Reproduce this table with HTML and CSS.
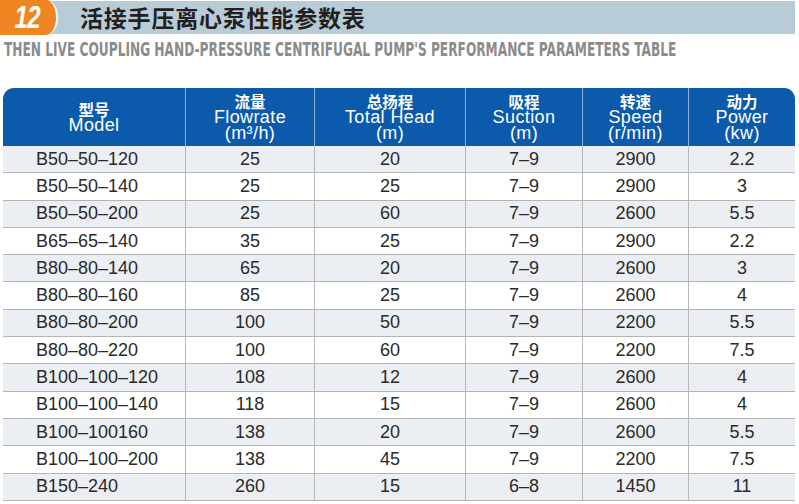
FILE: index.html
```html
<!DOCTYPE html>
<html lang="zh">
<head>
<meta charset="utf-8">
<title>活接手压离心泵性能参数表</title>
<link rel="stylesheet" href="styles.css">
</head>
<body>
<div class="page">
  <div class="band">
    <div class="tab"><span class="num">12</span></div>
    <h1 class="title">活接手压离心泵性能参数表</h1>
  </div>
  <p class="subtitle"><span class="sub-text">THEN LIVE COUPLING HAND-PRESSURE CENTRIFUGAL PUMP'S PERFORMANCE PARAMETERS TABLE</span></p>
  <div class="table-wrap">
    <table class="spec">
      <colgroup>
        <col class="c1"><col class="c2"><col class="c3"><col class="c4"><col class="c5"><col class="c6">
      </colgroup>
      <thead>
        <tr>
          <th><span class="zh">型号</span><span class="en">Model</span></th>
          <th><span class="zh">流量</span><span class="en">Flowrate</span><span class="en">(m³/h)</span></th>
          <th><span class="zh">总扬程</span><span class="en">Total Head</span><span class="en">(m)</span></th>
          <th><span class="zh">吸程</span><span class="en">Suction</span><span class="en">(m)</span></th>
          <th><span class="zh">转速</span><span class="en">Speed</span><span class="en">(r/min)</span></th>
          <th><span class="zh">动力</span><span class="en">Power</span><span class="en">(kw)</span></th>
        </tr>
      </thead>
      <tbody>
        <tr><td>B50–50–120</td><td>25</td><td>20</td><td>7–9</td><td>2900</td><td>2.2</td></tr>
        <tr><td>B50–50–140</td><td>25</td><td>25</td><td>7–9</td><td>2900</td><td>3</td></tr>
        <tr><td>B50–50–200</td><td>25</td><td>60</td><td>7–9</td><td>2600</td><td>5.5</td></tr>
        <tr><td>B65–65–140</td><td>35</td><td>25</td><td>7–9</td><td>2900</td><td>2.2</td></tr>
        <tr><td>B80–80–140</td><td>65</td><td>20</td><td>7–9</td><td>2600</td><td>3</td></tr>
        <tr><td>B80–80–160</td><td>85</td><td>25</td><td>7–9</td><td>2600</td><td>4</td></tr>
        <tr><td>B80–80–200</td><td>100</td><td>50</td><td>7–9</td><td>2200</td><td>5.5</td></tr>
        <tr><td>B80–80–220</td><td>100</td><td>60</td><td>7–9</td><td>2200</td><td>7.5</td></tr>
        <tr><td>B100–100–120</td><td>108</td><td>12</td><td>7–9</td><td>2600</td><td>4</td></tr>
        <tr><td>B100–100–140</td><td>118</td><td>15</td><td>7–9</td><td>2600</td><td>4</td></tr>
        <tr><td>B100–100160</td><td>138</td><td>20</td><td>7–9</td><td>2600</td><td>5.5</td></tr>
        <tr><td>B100–100–200</td><td>138</td><td>45</td><td>7–9</td><td>2200</td><td>7.5</td></tr>
        <tr><td>B150–240</td><td>260</td><td>15</td><td>6–8</td><td>1450</td><td>11</td></tr>
      </tbody>
    </table>
  </div>
</div>
</body>
</html>
```

FILE: styles.css
```css
html, body {
  margin: 0;
  padding: 0;
  background: #ffffff;
}

.page {
  width: 799px;
  height: 504px;
  overflow: hidden;
  font-family: "Liberation Sans", Arial, "Noto Sans CJK SC", sans-serif;
}

.band {
  display: flex;
  align-items: center;
  width: 795px;
  height: 33px;
  margin-top: 1px;
  background: #b8ccd8;
}

.tab {
  box-sizing: border-box;
  width: 58px;
  height: 35px;
  margin-top: -1px;
  margin-bottom: -1px;
  background: #ef8521;
  border-right: 2px solid #ffffff;
  border-radius: 0 12px 12px 0 / 0 18px 18px 0;
  display: flex;
  align-items: center;
  justify-content: center;
}

.num {
  display: inline-block;
  color: #ffffff;
  font-family: "Liberation Sans", Arial, sans-serif;
  font-weight: 700;
  font-style: italic;
  font-size: 31px;
  line-height: 1;
  transform: scaleX(0.78);
  margin-left: -2px;
  letter-spacing: -1px;
}

.title {
  margin: 0 0 0 22px;
  font-family: "Noto Sans CJK SC", sans-serif;
  font-weight: 700;
  font-size: 23px;
  line-height: 33px;
  letter-spacing: 0.8px;
  color: #231f20;
}

.subtitle {
  margin: 5px 0 0 4px;
  height: 20px;
  line-height: 20px;
  white-space: nowrap;
}

.sub-text {
  display: inline-block;
  font-family: "Liberation Sans Narrow", "DejaVu Sans Condensed", "Liberation Sans", sans-serif;
  font-weight: 700;
  font-size: 20px;
  color: #8b8b8b;
  transform-origin: left center;
  transform: scaleX(0.677);
}

.table-wrap {
  margin: 29px 0 0 3px;
  width: 792px;
  border-radius: 11px 11px 0 0;
  overflow: hidden;
}

.spec {
  width: 792px;
  border-collapse: separate;
  border-spacing: 0;
  table-layout: fixed;
}

.c1 { width: 182px; }
.c2 { width: 129px; }
.c3 { width: 151px; }
.c4 { width: 117px; }
.c5 { width: 106px; }
.c6 { width: 107px; }

.spec th {
  height: 58px;
  padding: 0;
  background: #0b5aab;
  color: #ffffff;
  font-weight: 400;
  vertical-align: middle;
  text-align: center;
  border-left: 1px solid #8db0d9;
}

.spec th:first-child {
  border-left: none;
}

.spec th span {
  display: block;
  line-height: 16px;
}

.spec th .zh {
  font-family: "Noto Sans CJK SC", sans-serif;
  font-weight: 700;
  font-size: 15.5px;
}

.spec th .en {
  font-family: "Liberation Sans", Arial, sans-serif;
  font-size: 18px;
  letter-spacing: 0.4px;
}

.spec td {
  box-sizing: border-box;
  height: 27.3px;
  padding: 0;
  text-align: center;
  font-family: "Liberation Sans", Arial, sans-serif;
  font-size: 18px;
  color: #2a2a2a;
  border-left: 1px solid #b8b8b8;
  border-bottom: 1px solid #b4b4b4;
  vertical-align: middle;
}

.spec td:first-child {
  border-left: none;
  text-align: left;
  padding-left: 33px;
}

.spec tbody tr:nth-child(odd) td {
  background: #ebeef2;
}

.spec tbody tr:nth-child(even) td {
  background: #ffffff;
}
```
